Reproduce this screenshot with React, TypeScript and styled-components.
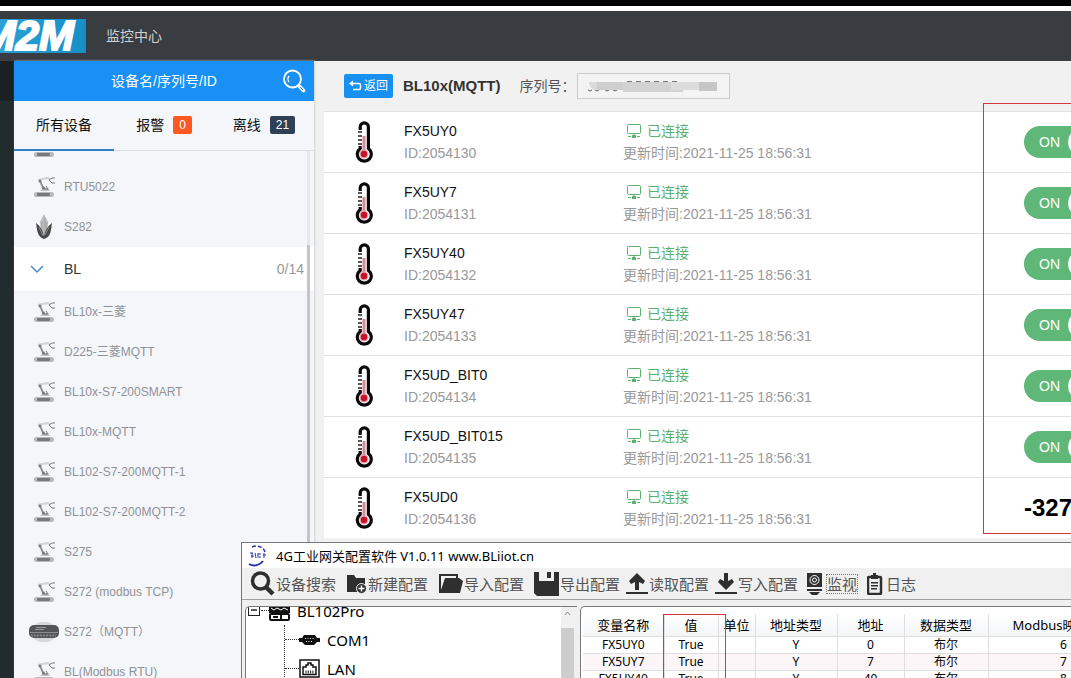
import React from "react";
import styled, { createGlobalStyle, css } from "styled-components";

const webFont = `"Liberation Sans", "Noto Sans CJK SC", sans-serif`;
const appFont = `"Noto Sans", "Noto Sans CJK SC", sans-serif`;

const GlobalStyle = createGlobalStyle`
  *, *::before, *::after { box-sizing: border-box; }
  body { margin: 0; background: #f1f1f1; font-family: ${webFont}; font-size: 14px; line-height: 20px; color: #111; overflow: hidden; }
  button, input { font: inherit; color: inherit; margin: 0; }
  button { border: 0; background: none; padding: 0; cursor: pointer; }
  ul { list-style: none; margin: 0; padding: 0; }
  h1, p { margin: 0; }
  svg { display: block; flex: none; }
`;

const Screen = styled.div`
  position: relative;
  display: flex;
  flex-direction: column;
  height: 100vh;
  overflow: hidden;
`;

const TopEdge = styled.div`
  flex: none;
  height: 11px;
  background: #fff;
  border-top: 6px solid #000;
`;

const Header = styled.header`
  flex: none;
  display: flex;
  align-items: center;
  gap: 20px;
  height: 50px;
  background: #393d42;
  color: #cfd1d3;
`;

const Logo = styled.div`
  display: flex;
  justify-content: flex-end;
  align-items: center;
  width: 86px;
  height: 34px;
  padding-right: 12px;
  overflow: hidden;
  background: linear-gradient(90deg, #2aa0d6, #168fc6);
  color: #fff;
  font-size: 42px;
  font-style: italic;
  font-weight: 700;
  -webkit-text-stroke: 2px #fff;
  line-height: 34px;
`;

const Body = styled.div`
  flex: 1;
  min-height: 0;
  display: flex;
`;

const Rail = styled.div`
  flex: none;
  width: 14px;
  background: #222c2e;
  border-top: 40px solid #1b2123;
`;

const Sidebar = styled.aside`
  flex: none;
  display: flex;
  flex-direction: column;
  width: 300px;
  background: #f4f6fa;
  box-shadow: 1px 0 2px #d4d4d4;
`;

const SearchBar = styled.form`
  flex: none;
  display: flex;
  align-items: center;
  height: 40px;
  padding-right: 8px;
  background: #1890f5;
  color: #fff;
`;

const SearchInput = styled.input`
  flex: 1;
  min-width: 0;
  height: 40px;
  padding: 0 0 0 32px;
  border: 0;
  outline: 0;
  background: none;
  text-align: center;
  &::placeholder { color: #fff; opacity: 1; }
`;

const Tabs = styled.div`
  flex: none;
  display: grid;
  grid-template-columns: repeat(3, 1fr);
  height: 50px;
  border-bottom: 1px solid #dcdfe3;
`;

const Tab = styled.button<{ $active?: boolean }>`
  display: flex;
  align-items: center;
  justify-content: center;
  gap: 9px;
  height: 50px;
  border-bottom: 2px solid ${(p) => (p.$active ? "#2f80c4" : "transparent")};
`;

const Badge = styled.span<{ $color: string }>`
  padding: 0 6px;
  border-radius: 2px;
  background: ${(p) => p.$color};
  color: #fff;
  font-size: 12px;
  line-height: 18px;
`;

const ListArea = styled.div`
  position: relative;
  flex: 1;
  min-height: 0;
  overflow: hidden;
`;

const DeviceList = styled.ul`
  margin-top: -24px;
`;

const DeviceItem = styled.li`
  display: flex;
  align-items: center;
  gap: 5px;
  height: 40px;
  padding-left: 15px;
  color: #909296;
  font-size: 12px;
  white-space: pre;
`;

const IconSlot = styled.span`
  display: flex;
  justify-content: center;
  width: 30px;
`;

const GroupItem = styled.li`
  display: flex;
  align-items: center;
  height: 45px;
  padding: 0 10px 0 16px;
  border-bottom: 1px solid #f0f2f6;
  background: #fff;
  color: #333;
`;

const GroupName = styled.span`
  flex: 1;
  margin-left: 20px;
`;

const GroupCount = styled.span`
  color: #999;
`;

const ScrollTrack = styled.div`
  position: absolute;
  top: 0;
  right: 4px;
  bottom: 0;
  width: 3px;
  padding-top: 94px;
  background: #e6e8eb;
`;

const ScrollThumb = styled.div`
  height: 100%;
  background: #c6c6c8;
`;

const Main = styled.main`
  flex: 1;
  min-width: 0;
  margin-left: 10px;
`;

const MainBar = styled.div`
  display: flex;
  align-items: center;
  height: 50px;
  padding-left: 20px;
  color: #555;
`;

const BackButton = styled.button`
  display: flex;
  align-items: center;
  gap: 2px;
  height: 24px;
  padding: 0 5px 0 4px;
  border-radius: 2px;
  background: #1890f0;
  color: #fff;
  font-size: 12px;
`;

const DeviceTitle = styled.h1`
  margin: 0 19px 0 10px;
  color: #333;
  font-size: 15px;
`;

const SerialLabel = styled.label`
  display: flex;
  align-items: center;
`;

const SerialBox = styled.span`
  position: relative;
  display: block;
  margin-left: 1px;
  svg { position: absolute; top: 6px; left: 10px; }
`;

const SerialInput = styled.input`
  display: block;
  width: 153px;
  height: 26px;
  border: 1px solid #ccc;
  background: #f4f4f4;
  outline: 0;
`;

const SensorArea = styled.div`
  position: relative;
  background: #fff;
`;

const SensorRow = styled.li`
  display: grid;
  grid-template-columns: 80px 219px minmax(0, 1fr) 47px;
  align-items: center;
  height: 61px;
  border-top: 1px solid #e2e2e2;
  white-space: nowrap;
`;

const SensorIcon = styled.span`
  display: flex;
  justify-content: center;
`;

const Line = styled.p<{ $tone?: "muted" | "ok" }>`
  display: flex;
  align-items: center;
  gap: 5px;
  height: 22px;
  color: #111;
  ${(p) => p.$tone === "muted" && css`color: #999;`}
  ${(p) => p.$tone === "ok" && css`color: #5cb070; padding-left: 4px;`}
`;

const Toggle = styled.label`
  display: flex;
  align-items: center;
  justify-content: space-between;
  width: 76px;
  height: 32px;
  padding: 0 4px 0 15px;
  border-radius: 16px;
  background: #5fb878;
  color: #fff;
`;

const ToggleInput = styled.input`
  appearance: none;
  width: 28px;
  height: 28px;
  border-radius: 50%;
  background: #fff;
`;

const Reading = styled.strong`
  font-size: 24px;
  color: #000;
`;

const ControlMark = styled.div`
  position: absolute;
  top: -8px;
  right: -1px;
  bottom: 4px;
  width: 89px;
  border: 1px solid #d2393d;
  pointer-events: none;
`;

const ConfigWindow = styled.section`
  position: absolute;
  top: 542px;
  left: 241px;
  right: 0;
  bottom: 0;
  display: flex;
  flex-direction: column;
  overflow: hidden;
  border: solid #73767a;
  border-width: 1px 0 0 1px;
  background: #f0f0f0;
  color: #000;
  font-family: ${appFont};
`;

const TitleBar = styled.div`
  flex: none;
  display: flex;
  align-items: center;
  gap: 8px;
  height: 25px;
  padding-left: 5px;
  background: #fff;
  font-size: 13px;
`;

const ToolBar = styled.div`
  flex: none;
  display: flex;
  align-items: center;
  gap: 5px;
  height: 32px;
  padding-left: 8px;
  border-bottom: 1px solid #a0a0a0;
  color: #555;
  font-size: 15px;
`;

const ToolButton = styled.button`
  flex: none;
  display: flex;
  align-items: center;
  white-space: nowrap;
`;

const ToolIcon = styled.span<{ $width: number }>`
  display: flex;
  justify-content: flex-end;
  width: ${(p) => p.$width}px;
  padding-right: 1px;
`;

const ToolText = styled.span<{ $focused?: boolean }>`
  line-height: 18px;
  outline: ${(p) => (p.$focused ? "1px dotted #777" : "0")};
`;

const Panes = styled.div`
  flex: 1;
  min-height: 0;
  display: flex;
  gap: 3px;
  padding: 6px 0 0 3px;
`;

const Pane = styled.div<{ $grow?: boolean }>`
  display: flex;
  flex: ${(p) => (p.$grow ? "1" : "none")};
  width: ${(p) => (p.$grow ? "auto" : "332px")};
  min-width: 0;
  overflow: hidden;
  border: solid #7a7a7a;
  border-width: 1px 0 0 1px;
  border-radius: 5px 0 0 0;
  background: #fff;
`;

const Tree = styled.ul`
  flex: 1;
  margin-top: -11px;
  font-size: 15px;
`;

const TreeNode = styled.li`
  display: flex;
  align-items: center;
  height: 29px;
  padding-left: 2px;
`;

const TreeBranch = styled.ul`
  margin-left: 38px;
  border-left: 1px dotted #333;
`;

const TreeLeaf = styled(TreeNode)`
  padding-left: 0;
`;

const Connector = styled.span<{ $short?: boolean }>`
  width: ${(p) => (p.$short ? 8 : 14)}px;
  border-top: 1px dotted #333;
`;

const TreeText = styled.span`
  margin-left: 7px;
`;

const PaneScroll = styled.div`
  display: flex;
  flex-direction: column;
  align-items: center;
  width: 16px;
  padding-right: 3px;
  background: #f0f0f0;
`;

const PaneArrow = styled.span`
  display: flex;
  justify-content: center;
  flex: none;
  height: 21px;
  padding-top: 4px;
`;

const PaneThumb = styled.span`
  flex: 1;
  width: 13px;
  background: #cdcdcd;
`;

const TableArea = styled.div`
  position: relative;
  flex: 1;
  padding: 7px 0 0 2px;
`;

const DataTable = styled.table`
  width: 556px;
  table-layout: fixed;
  border-collapse: collapse;
  font-size: 12px;
  th, td {
    padding: 0;
    border-right: 1px solid #dedede;
    border-bottom: 1px solid #dedede;
    text-align: center;
    white-space: nowrap;
    overflow: visible;
  }
  th {
    height: 22px;
    font-size: 13px;
    font-weight: 400;
    line-height: 20px;
    background: linear-gradient(#fff, #f4f5f7);
  }
  td { height: 17px; line-height: 16px; }
  tbody tr:nth-child(even) { background: #fcf6f8; }
`;

const ValueMark = styled.div`
  position: absolute;
  top: 7px;
  left: 82px;
  bottom: -1px;
  width: 63px;
  border: 1px solid #d2393d;
  pointer-events: none;
`;

const RobotIcon = () => (
  <svg width="22" height="20" viewBox="0 0 22 20" aria-hidden="true">
    <rect x="1" y="15" width="20" height="5" rx="2.500" fill="#b9b9bb" />
    <rect x="4" y="16" width="13" height="3" rx="1" fill="#77797b" />
    <path d="M7 14h10l-2-3h-5z" fill="#c0c2c4" />
    <path d="M5 3l9-2 3 1" stroke="#d0d2d4" strokeWidth="2" fill="none" />
    <path d="M7 4l3 7" stroke="#b4b6b8" strokeWidth="2" fill="none" />
    <path d="M7 4l4 8h4M13 9l2 3" stroke="#77797b" strokeWidth="1" fill="none" />
    <path d="M22 1h-3l-3 2 3 3h3" stroke="#77797b" fill="none" />
    <circle cx="7" cy="4" r="1.500" fill="#7c7e80" />
    <circle cx="10.500" cy="11" r="1.500" fill="#77797b" />
  </svg>
);

const CropIcon = () => (
  <svg width="18" height="26" viewBox="0 0 18 26" aria-hidden="true">
    <path d="M9 0L5 8l1 12h6l1-12z" fill="#bcbcbc" />
    <path d="M7 7v12M10 4v15M12 8l-1 10" stroke="#a6a6a6" />
    <path d="M9 25C2 23 2 15 1 9c4 3 6 6 8 13 2-7 4-10 8-13-1 7-1 14-8 16z" fill="#484848" />
    <path d="M4 13l4 9M14 13l-4 8" stroke="#888" />
  </svg>
);

const GatewayIcon = () => (
  <svg width="30" height="22" viewBox="0 0 30 22" aria-hidden="true">
    <rect x="3" y="1" width="24" height="20" rx="9" fill="#d7d8da" />
    <rect x="0" y="4" width="30" height="13" rx="5" fill="#525457" />
    <path d="M7 6.500h10M6 8.500h9" stroke="#999" />
    <path d="M1 11.500h28" stroke="#8b8d8f" />
    <path d="M2 14.500h25" stroke="#808285" strokeDasharray="2 1" strokeWidth="2" />
  </svg>
);

const ThermometerIcon = () => (
  <svg width="18" height="42" viewBox="0 0 18 42" aria-hidden="true">
    <path d="M5.500 7a3.500 3.500 0 0 1 8 0v20a6.600 6.600 0 1 1-8 0z" fill="#fff" />
    <path
      d="M5.200 9V6a4.100 4.100 0 0 1 8.200 0v21.500a7 7 0 1 1-8.200 0V25"
      fill="none"
      stroke="#0a0a0a"
      strokeWidth="3.200"
    />
    <path d="M3 11h4M3 15h4M3 19h4M3 23h4" stroke="#222" strokeWidth="1.500" />
    <path d="M9 15v15" stroke="#d98a97" strokeWidth="3" />
    <circle cx="9" cy="33" r="4.500" fill="#e7a2ac" />
    <circle cx="9" cy="33" r="3.200" fill="#c4122b" />
  </svg>
);

const LinkedIcon = () => (
  <svg width="15" height="15" viewBox="0 0 15 15" fill="none" stroke="#5cb070" aria-hidden="true">
    <rect x="0.500" y="0.500" width="13" height="9" rx="1" />
    <path d="M7 9.500v3M1 12.500h3M10 12.500h3" />
    <rect x="5.500" y="11.500" width="3" height="2" fill="#5cb070" />
  </svg>
);

const AppMark = () => (
  <svg width="21" height="22" viewBox="0 0 21 22" fill="none" stroke="#2a2fb4" aria-hidden="true">
    <path d="M5 2c5-2 11-1 13 5" strokeWidth="1.500" strokeDasharray="4 2" />
    <path d="M2 19c5 3 11 1 14-3" strokeWidth="2" />
    <path d="M3 8h3M4 11h3M5 8v5M8 8l1 5M11 8v5M11 9h3M12 12h2M17 8v5M16 10h3" />
  </svg>
);

const dark = "#2f2f2f";

const toolIcons: Record<string, React.ReactElement> = {
  search: (
    <svg width="25" height="25" viewBox="0 0 25 25" fill="none" stroke={dark} aria-hidden="true">
      <circle cx="10.500" cy="10" r="8" strokeWidth="3.500" />
      <path d="M16 16l7 7" strokeWidth="4.500" />
    </svg>
  ),
  create: (
    <svg width="20" height="20" viewBox="0 0 20 20" aria-hidden="true">
      <path d="M0 1h7l2 3h9v14H0z" fill={dark} />
      <circle cx="14.500" cy="14.500" r="5" fill={dark} stroke="#f0f0f0" />
      <path d="M14.500 11.500v6M11.500 14.500h6" stroke="#fff" strokeWidth="1.500" />
    </svg>
  ),
  open: (
    <svg width="25" height="20" viewBox="0 0 25 20" aria-hidden="true">
      <path d="M2 19V1h17v4" fill="none" stroke={dark} strokeWidth="2" />
      <path d="M7 4h14l4 3-3 12H2z" fill={dark} />
    </svg>
  ),
  save: (
    <svg width="25" height="24" viewBox="0 0 25 24" aria-hidden="true">
      <path d="M0 0h5v9h15V0h5v24H3l-3-3z" fill={dark} />
      <path d="M13 0h4v6h-4z" fill={dark} />
    </svg>
  ),
  upload: (
    <svg width="22" height="22" viewBox="0 0 22 22" fill={dark} aria-hidden="true">
      <path d="M11 0l8 8-2 3-4-2v8H9V9l-4 2-2-3zM0 19h22v2H0z" />
    </svg>
  ),
  download: (
    <svg width="22" height="22" viewBox="0 0 22 22" fill={dark} aria-hidden="true">
      <path d="M9 0h4v8l4-2 2 3-8 8-8-8 2-3 4 2zM0 19h22v2H0z" />
    </svg>
  ),
  monitor: (
    <svg width="19" height="22" viewBox="0 0 19 22" aria-hidden="true">
      <path d="M0 0h15v14H0zM0 16h15v2H0zM2 19h11l-3 3H5z" fill={dark} />
      <circle cx="7.500" cy="7" r="4.500" fill="none" stroke="#fff" />
      <circle cx="7.500" cy="7" r="2" fill="none" stroke="#fff" />
    </svg>
  ),
  log: (
    <svg width="18" height="22" viewBox="0 0 18 22" aria-hidden="true">
      <rect x="1" y="4" width="13" height="17" rx="1" fill="#f0f0f0" stroke={dark} strokeWidth="2.500" />
      <path d="M4 2h2V0h3v2h2v4H4zM4 9h7v1.500H4zM4 12h7v1.500H4zM4 15h6v1.500H4z" fill={dark} />
    </svg>
  ),
};

type Kind = "robot" | "crop" | "gateway";
const kindIcons: Record<Kind, React.ReactElement> = {
  robot: <RobotIcon />,
  crop: <CropIcon />,
  gateway: <GatewayIcon />,
};

const upperDevices: [string, Kind][] = [
  ["", "robot"],
  ["RTU5022", "robot"],
  ["S282", "crop"],
];

const groupDevices: [string, Kind][] = [
  ["BL10x-三菱", "robot"],
  ["D225-三菱MQTT", "robot"],
  ["BL10x-S7-200SMART", "robot"],
  ["BL10x-MQTT", "robot"],
  ["BL102-S7-200MQTT-1", "robot"],
  ["BL102-S7-200MQTT-2", "robot"],
  ["S275", "robot"],
  ["S272 (modbus TCP)", "robot"],
  ["S272（MQTT）", "gateway"],
  ["BL(Modbus RTU)", "robot"],
];

const sensors = [
  { name: "FX5UY0", id: 2054130 },
  { name: "FX5UY7", id: 2054131 },
  { name: "FX5UY40", id: 2054132 },
  { name: "FX5UY47", id: 2054133 },
  { name: "FX5UD_BIT0", id: 2054134 },
  { name: "FX5UD_BIT015", id: 2054135 },
  { name: "FX5UD0", id: 2054136, reading: "-327" },
];

const tools = [
  { icon: "search", label: "设备搜索", width: 26 },
  { icon: "create", label: "新建配置", width: 27 },
  { icon: "open", label: "导入配置", width: 31 },
  { icon: "save", label: "导出配置", width: 31 },
  { icon: "upload", label: "读取配置", width: 24 },
  { icon: "download", label: "写入配置", width: 24 },
  { icon: "monitor", label: "监视", width: 24 },
  { icon: "log", label: "日志", width: 24 },
];

const columns: [string, number][] = [
  ["变量名称", 81],
  ["值", 54],
  ["单位", 37],
  ["地址类型", 82],
  ["地址", 67],
  ["数据类型", 84],
  ["Modbus映射地址", 151],
];

const records = [
  ["FX5UY0", "True", "", "Y", "0", "布尔", "6"],
  ["FX5UY7", "True", "", "Y", "7", "布尔", "7"],
  ["FX5UY40", "True", "", "Y", "40", "布尔", "8"],
];

const Devices = ({ items }: { items: [string, Kind][] }) => (
  <>
    {items.map(([name, kind], i) => (
      <DeviceItem key={i}>
        <IconSlot>{kindIcons[kind]}</IconSlot>
        {name}
      </DeviceItem>
    ))}
  </>
);

export default function App() {
  return (
    <>
      <GlobalStyle />
      <Screen>
        <TopEdge />
        <Header>
          <Logo>M2M</Logo>
          <span>监控中心</span>
        </Header>
        <Body>
          <Rail />
          <Sidebar>
            <SearchBar onSubmit={(e) => e.preventDefault()}>
              <SearchInput aria-label="设备名/序列号/ID" placeholder="设备名/序列号/ID" />
              <button aria-label="搜索">
                <svg width="24" height="24" viewBox="0 0 24 24" fill="none" stroke="#fff" aria-hidden="true">
                  <circle cx="10.500" cy="10" r="8.500" strokeWidth="1.800" />
                  <path d="M7 13a5 5 0 0 1 0-6" strokeWidth="1.300" />
                  <path d="M16 16l1 1" strokeWidth="2" />
                  <path d="M17.500 17.500l4 4" strokeWidth="3.800" strokeLinecap="round" />
                  <path d="M18 18l3 3" stroke="#1890f5" />
                </svg>
              </button>
            </SearchBar>
            <Tabs>
              <Tab $active>所有设备</Tab>
              <Tab>
                报警 <Badge $color="#ff5722">0</Badge>
              </Tab>
              <Tab>
                离线 <Badge $color="#2f4056">21</Badge>
              </Tab>
            </Tabs>
            <ListArea>
              <DeviceList>
                <Devices items={upperDevices} />
                <GroupItem>
                  <svg width="14" height="9" viewBox="0 0 14 9" fill="none" stroke="#4a8cd0" aria-hidden="true">
                    <path d="M1 1l6 6 6-6" strokeWidth="1.500" />
                  </svg>
                  <GroupName>BL</GroupName>
                  <GroupCount>0/14</GroupCount>
                </GroupItem>
                <Devices items={groupDevices} />
              </DeviceList>
              <ScrollTrack>
                <ScrollThumb />
              </ScrollTrack>
            </ListArea>
          </Sidebar>
          <Main>
            <MainBar>
              <BackButton>
                <svg width="14" height="12" viewBox="0 0 14 12" fill="none" stroke="#fff" strokeWidth="1.500" aria-hidden="true">
                  <path d="M3 3.500h8q1.500 0 1.500 1.500v3q0 1.500-1.500 1.500H5" />
                  <path d="M5 0.500v6L1 3.500z" fill="#fff" stroke="none" />
                </svg>
                返回
              </BackButton>
              <DeviceTitle>BL10x(MQTT)</DeviceTitle>
              <SerialLabel>
                序列号：
                <SerialBox>
                  <SerialInput readOnly />
                  <svg width="132" height="14" viewBox="0 0 132 14" aria-hidden="true">
                    <path d="M1 11q2 2 4 0M8 11q2 2 4 0M18 11q2 2 4 0M26 11q2 2 4 0" stroke="#666" fill="none" />
                    <path d="M40 2.500h50" stroke="#777" strokeDasharray="5 4" />
                    <path d="M2 3h30v8H8q-6-2-6-8z" fill="#dadada" />
                    <path d="M10 3h30v8H10z" fill="#cfcfcf" />
                    <path d="M36 3h60v10H36z" fill="#d3d3d3" />
                    <path d="M84 3h30v8H84z" fill="#dcdcdc" />
                    <path d="M112 3h18v9h-18z" fill="#c6c6c6" />
                  </svg>
                </SerialBox>
              </SerialLabel>
            </MainBar>
            <SensorArea>
              <ul>
                {sensors.map((s) => (
                  <SensorRow key={s.id}>
                    <SensorIcon>
                      <ThermometerIcon />
                    </SensorIcon>
                    <div>
                      <Line>{s.name}</Line>
                      <Line $tone="muted">ID:{s.id}</Line>
                    </div>
                    <div>
                      <Line $tone="ok">
                        <LinkedIcon />
                        已连接
                      </Line>
                      <Line $tone="muted">更新时间:2021-11-25 18:56:31</Line>
                    </div>
                    {s.reading ? (
                      <Reading>{s.reading}</Reading>
                    ) : (
                      <Toggle>
                        ON
                        <ToggleInput type="checkbox" defaultChecked />
                      </Toggle>
                    )}
                  </SensorRow>
                ))}
              </ul>
              <ControlMark />
            </SensorArea>
          </Main>
        </Body>
        <ConfigWindow>
          <TitleBar>
            <AppMark />
            4G工业网关配置软件 V1.0.11 www.BLiiot.cn
          </TitleBar>
          <ToolBar>
            {tools.map((t) => (
              <ToolButton key={t.icon}>
                <ToolIcon $width={t.width}>{toolIcons[t.icon]}</ToolIcon>
                <ToolText $focused={t.icon === "monitor"}>{t.label}</ToolText>
              </ToolButton>
            ))}
          </ToolBar>
          <Panes>
            <Pane>
              <Tree>
                <TreeNode>
                  <svg width="13" height="13" viewBox="0 0 13 13" fill="none" stroke="#222" aria-hidden="true">
                    <rect x="0.500" y="0.500" width="11" height="11" />
                    <path d="M3 6h6" strokeWidth="1.500" />
                  </svg>
                  <Connector $short />
                  <svg width="21" height="20" viewBox="0 0 21 20" aria-hidden="true">
                    <path d="M0 4h21v8H0z" fill="#111" />
                    <path d="M2 7l3 2 3-2 4 2 3-2 4 2" stroke="#fff" fill="none" />
                    <rect x="1" y="13" width="19" height="6" rx="1" fill="#fff" stroke="#111" strokeWidth="2" />
                    <path d="M12 13v6M4 16h5" stroke="#111" strokeWidth="2" />
                  </svg>
                  <TreeText>BL102Pro</TreeText>
                </TreeNode>
                <TreeBranch>
                  <TreeLeaf>
                    <Connector />
                    <svg width="21" height="14" viewBox="0 0 21 14" aria-hidden="true">
                      <path d="M0 5h3l2-3h11l2 3h3v4h-3l-3 3H6L3 9H0z" fill="#111" />
                      <path d="M6 5.500h9M7 8.500h7" stroke="#ddd" strokeDasharray="1 1.500" />
                    </svg>
                    <TreeText>COM1</TreeText>
                  </TreeLeaf>
                  <TreeLeaf>
                    <Connector />
                    <svg width="21" height="19" viewBox="0 0 21 19" fill="none" stroke="#111" aria-hidden="true">
                      <rect x="1" y="1" width="19" height="17" strokeWidth="1.500" />
                      <path d="M4 15.500V8h3V6h2V4h3v2h2v2h3v7.500z" strokeWidth="1.500" />
                      <path d="M6.500 13h8" strokeWidth="3" strokeDasharray="1 1.300" />
                    </svg>
                    <TreeText>LAN</TreeText>
                  </TreeLeaf>
                </TreeBranch>
              </Tree>
              <PaneScroll>
                <PaneArrow>
                  <svg width="7" height="5" viewBox="0 0 7 5" fill="none" stroke="#888" aria-hidden="true">
                    <path d="M1 4l2.500-3L6 4" />
                  </svg>
                </PaneArrow>
                <PaneThumb />
              </PaneScroll>
            </Pane>
            <Pane $grow>
              <TableArea>
                <DataTable>
                  <colgroup>
                    {columns.map(([name, width]) => (
                      <col key={name} width={width} />
                    ))}
                  </colgroup>
                  <thead>
                    <tr>
                      {columns.map(([name]) => (
                        <th key={name} scope="col">
                          {name}
                        </th>
                      ))}
                    </tr>
                  </thead>
                  <tbody>
                    {records.map((r) => (
                      <tr key={r[0]}>
                        {r.map((v, i) => (
                          <td key={i}>{v}</td>
                        ))}
                      </tr>
                    ))}
                  </tbody>
                </DataTable>
                <ValueMark />
              </TableArea>
            </Pane>
          </Panes>
        </ConfigWindow>
      </Screen>
    </>
  );
}
